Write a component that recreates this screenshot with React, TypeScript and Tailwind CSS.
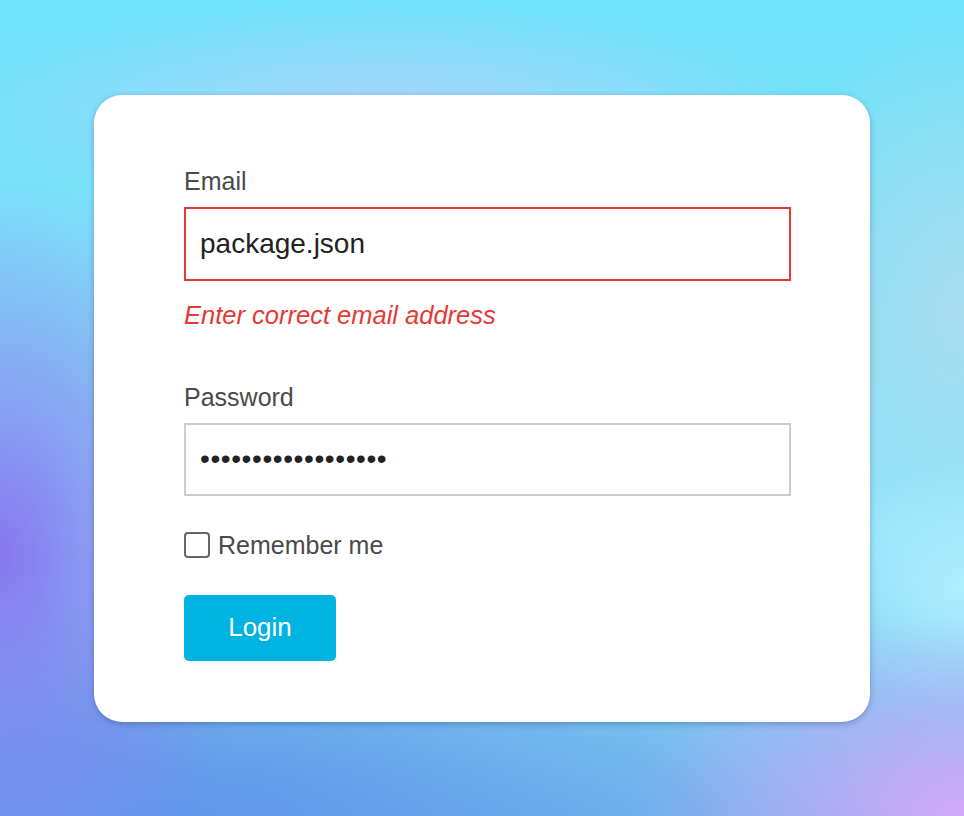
import { useState } from 'react'

export default function App() {
  const [email, setEmail] = useState('package.json')
  const [password, setPassword] = useState('xxxxxxxxxxxxxxxxxx')
  const [remember, setRemember] = useState(false)

  return (
    <div
      className="w-full h-[816px] flex items-center justify-center bg-[#7de3f8] font-['Liberation_Sans',Arial,sans-serif]"
      style={{
        backgroundImage:
          'radial-gradient(ellipse 260px 380px at 0% 68%, rgba(136,118,238,1), rgba(136,118,238,0) 100%), radial-gradient(ellipse 560px 220px at 20% 100%, rgba(96,150,232,1), rgba(96,150,232,0) 100%), radial-gradient(ellipse 340px 200px at 100% 100%, rgba(212,168,248,1), rgba(212,168,248,0) 100%), radial-gradient(ellipse 160px 120px at 100% 72%, rgba(176,238,252,1), rgba(176,238,252,0) 100%), radial-gradient(ellipse 200px 300px at 100% 38%, rgba(172,220,236,0.9), rgba(172,220,236,0) 100%), radial-gradient(ellipse 420px 110px at 40% 13%, rgba(172,212,252,0.9), rgba(172,212,252,0) 100%), linear-gradient(180deg, #6ee3fb 0%, #86e2f8 45%, #8ee6fa 65%, #6fb4ec 100%)',
      }}
    >
      <div className="w-[776px] h-[627px] bg-white rounded-[28px] shadow-[0_2px_6px_rgba(40,60,120,0.35)] pt-[71px] pl-[90px] pr-[79px]">
        <label className="block text-[25px] leading-[30px] text-[#4a4a4a] mb-[11px]">Email</label>
        <input
          type="text"
          value={email}
          onChange={(e) => setEmail(e.target.value)}
          className="block w-full h-[74px] border-2 border-[#e53935] px-[14px] text-[28px] text-[#222] outline-none"
        />
        <p className="mt-[19px] text-[25.5px] leading-[30px] italic text-[#e53935]">Enter correct email address</p>

        <label className="block mt-[52px] text-[25px] leading-[30px] text-[#4a4a4a] mb-[11px]">Password</label>
        <input
          type="password"
          value={password}
          onChange={(e) => setPassword(e.target.value)}
          className="block w-full h-[73px] border-2 border-[#cccccc] px-[14px] text-[28px] tracking-[0.6px] text-[#222] outline-none"
        />

        <label className="mt-[34px] flex items-center gap-[8px] cursor-pointer">
          <input
            type="checkbox"
            checked={remember}
            onChange={(e) => setRemember(e.target.checked)}
            className="appearance-none w-[26px] h-[26px] border-2 border-[#666] rounded-[4px] bg-white checked:bg-[#00b3e0]"
          />
          <span className="text-[25px] leading-[30px] text-[#4a4a4a]">Remember me</span>
        </label>

        <button className="mt-[35px] w-[152px] h-[66px] rounded-[5px] bg-[#00b3e0] text-white text-[26px]">
          Login
        </button>
      </div>
    </div>
  )
}
